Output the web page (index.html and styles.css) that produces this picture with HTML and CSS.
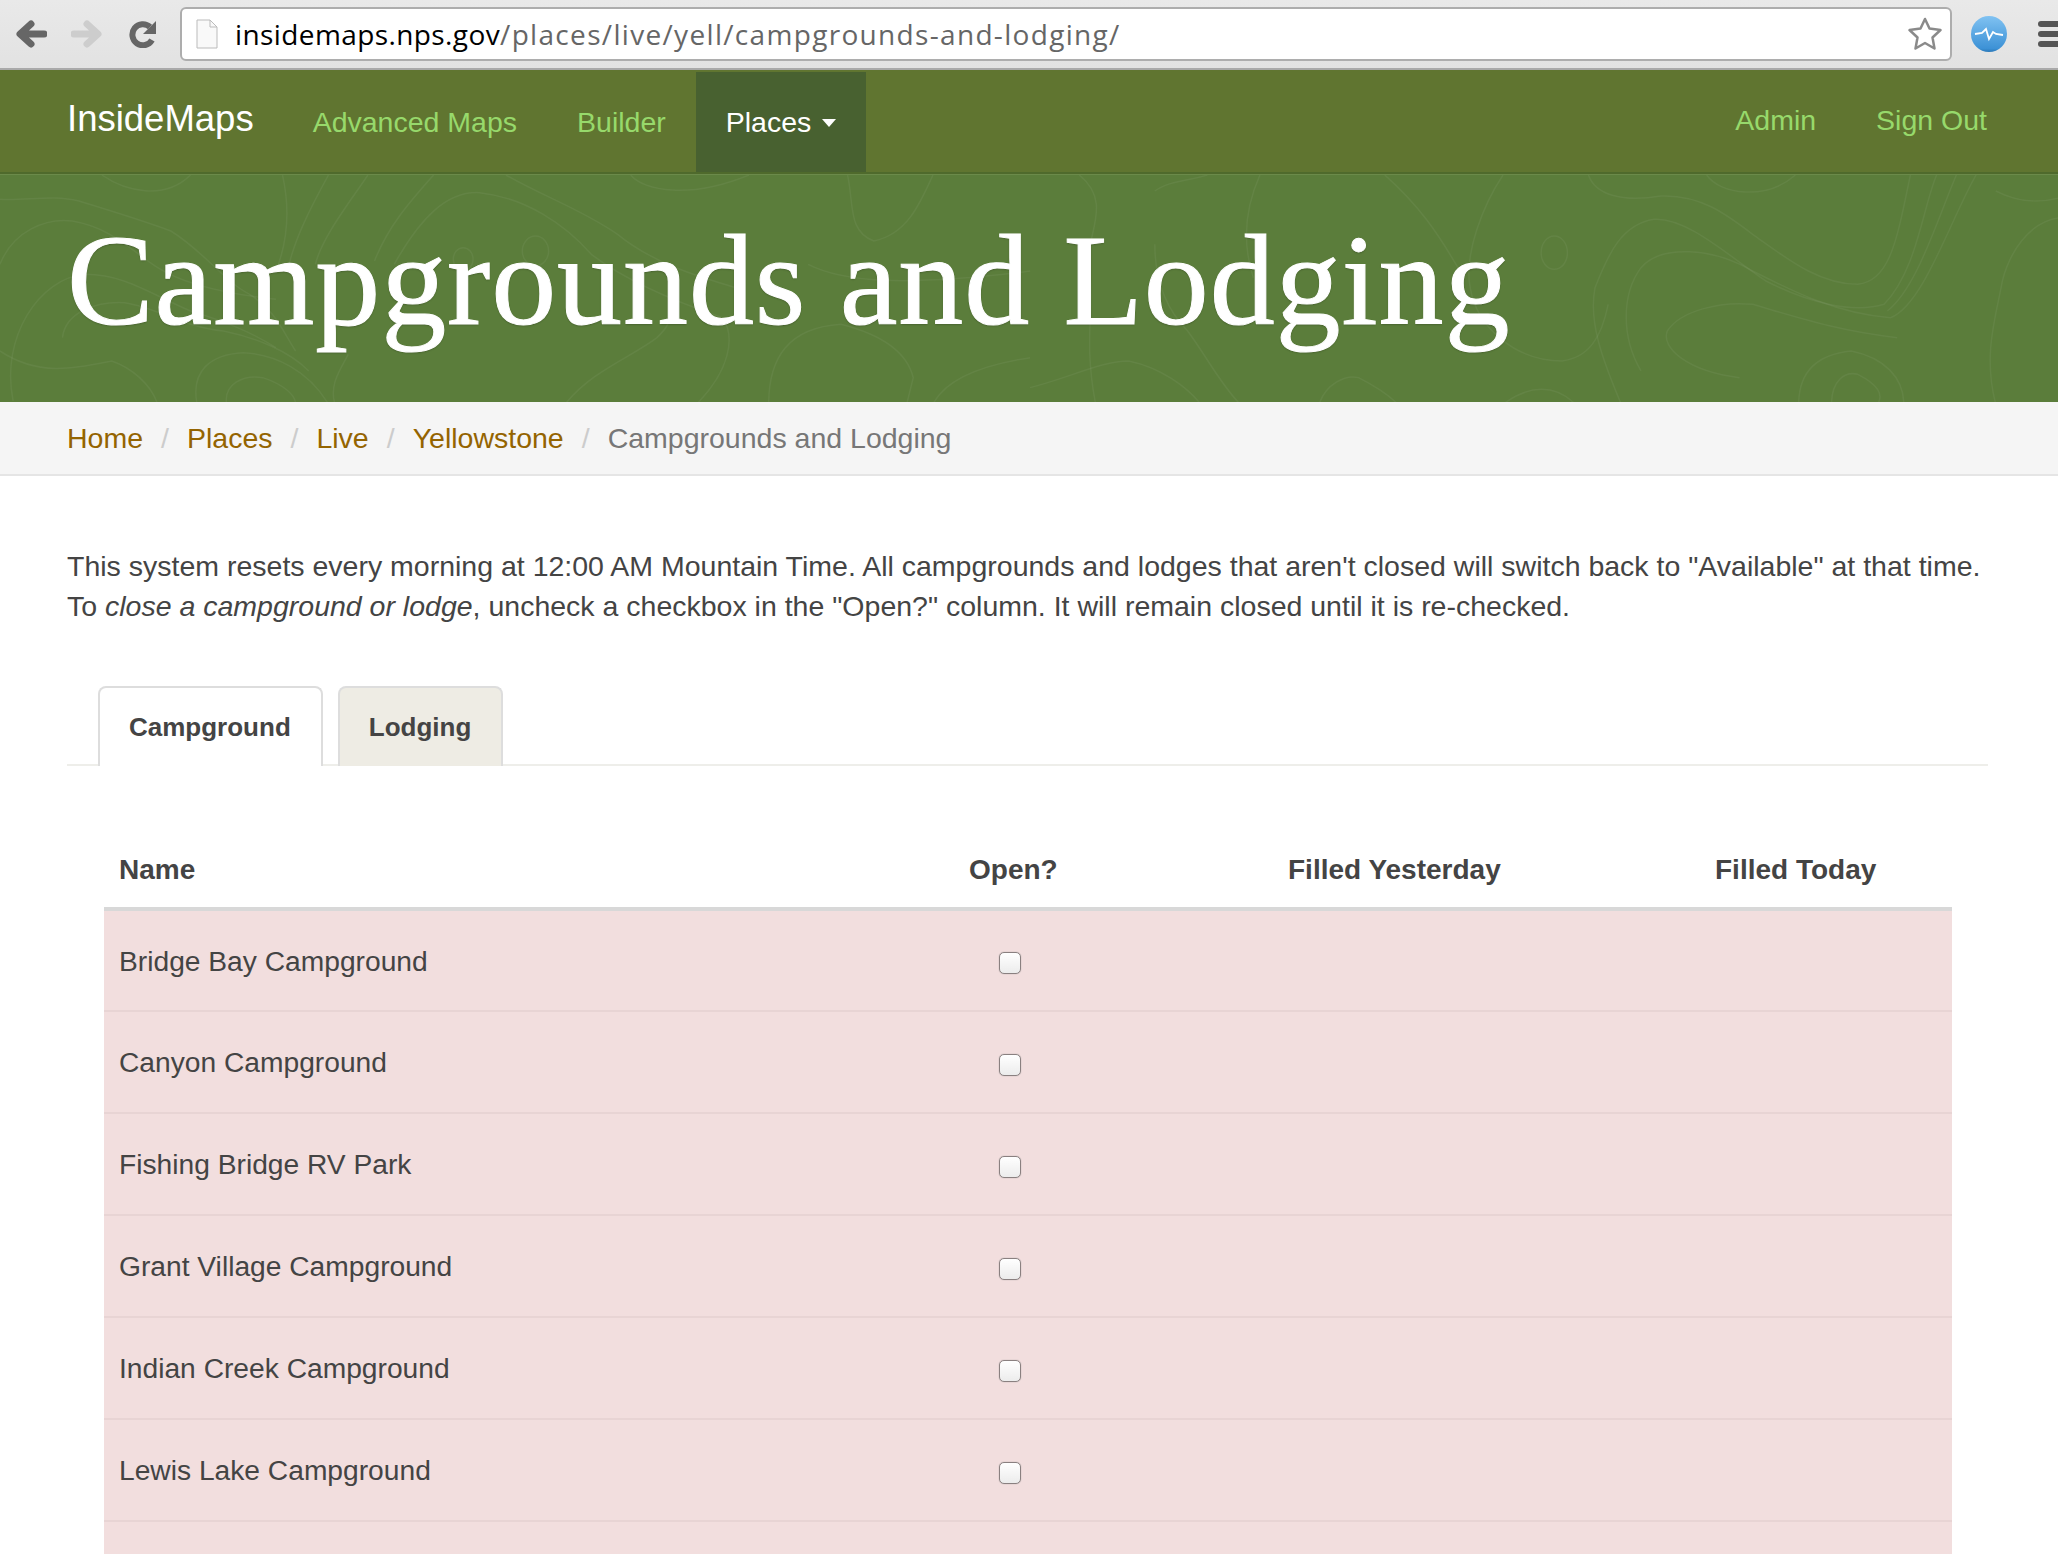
FILE: index.html
```html
<!DOCTYPE html>
<html lang="en">
<head>
  <meta charset="UTF-8">
  <title>Campgrounds and Lodging</title>
  <link rel="stylesheet" href="styles.css">
</head>
<body>
  <div class="browser-bar">
    <svg class="back-icon" width="31" height="28" viewBox="0 0 31 28"><path d="M28 14 H6 M15 4 L4 14 L15 24" fill="none" stroke="#666" stroke-width="7" stroke-linecap="round" stroke-linejoin="round"/></svg>
    <svg class="forward-icon" width="31" height="28" viewBox="0 0 31 28"><path d="M3 14 H25 M16 4 L27 14 L16 24" fill="none" stroke="#cdcdcd" stroke-width="7" stroke-linecap="round" stroke-linejoin="round"/></svg>
    <svg class="reload-icon" width="29" height="28" viewBox="0 0 29 28"><path d="M23 20 A10.500 10.500 0 1 1 21 7" fill="none" stroke="#666" stroke-width="6"/><path d="M27 1 V14 H14 Z" fill="#666"/></svg>
    <div class="url-box">
      <svg class="page-icon" width="22" height="30" viewBox="0 0 22 30"><path d="M1 1 H14 L21 8 V29 H1 Z" fill="#f9f9f9" stroke="#bbb"/><path d="M14 1 V8 H21" fill="none" stroke="#bbb"/></svg>
      <span class="url-text"><span class="url-host">insidemaps.nps.gov</span>/places/live/yell/campgrounds-and-lodging/</span>
      <svg class="star" width="36" height="34" viewBox="0 0 36 34"><path d="M18 2 L22.500 11.500 L33.500 13 L25.500 20.500 L27.500 31.500 L18 26 L8.500 31.500 L10.500 20.500 L2.500 13 L13.500 11.500 Z" fill="#fff" stroke="#8a8a8a" stroke-width="2.500" stroke-linejoin="round"/></svg>
    </div>
    <svg class="ext-icon" width="36" height="38" viewBox="0 0 36 38"><defs><linearGradient id="extBlue" x1="0" y1="0" x2="0" y2="1"><stop offset="0" stop-color="#80c2f2"/><stop offset="0.9" stop-color="#3d92d6"/><stop offset="1" stop-color="#2a78b8"/></linearGradient></defs><circle cx="18" cy="19" r="18" fill="url(#extBlue)"/><path d="M4 19 L11 18 L15 14 L18 24 L22 17 L25 19 L32 20" fill="none" stroke="#fff" stroke-width="1.800"/></svg>
    <div class="menu-icon"><span></span><span></span><span></span></div>
  </div>

  <nav class="navbar">
    <a class="brand" href="#">InsideMaps</a>
    <a class="nav-link" href="#">Advanced Maps</a>
    <a class="nav-link" href="#">Builder</a>
    <a class="nav-link active" href="#">Places <span class="caret"></span></a>
    <div class="nav-right">
      <a class="nav-link" href="#">Admin</a>
      <a class="nav-link" href="#">Sign Out</a>
    </div>
  </nav>

  <header class="hero">
    <svg class="topo" width="2058" height="228" viewBox="0 0 2058 228" fill="none">
      <g transform="scale(0.657 0.3333) translate(0 -12)">
        <path d="M0 85 C40 90 80 70 120 90 C170 120 220 150 260 180 C310 240 340 330 380 370 C420 420 430 480 450 540"/>
        <path d="M0 280 C20 180 70 140 110 150 C170 170 200 240 240 290 C280 340 350 370 420 385"/>
        <path d="M20 690 C0 500 60 320 130 310 C190 310 230 370 290 420 C340 450 380 480 420 530"/>
        <path d="M95 500 C100 420 150 390 190 395 C240 410 280 470 340 480 C390 500 440 540 470 600"/>
        <path d="M155 12 C190 60 250 90 290 12"/>
        <path d="M300 700 C290 600 320 550 370 545 C420 550 470 600 500 700"/>
        <path d="M345 700 C340 640 370 610 400 620 C430 640 450 670 450 700"/>
        <path d="M0 540 C60 620 120 590 170 570 C200 590 230 640 240 700"/>
        <ellipse cx="705" cy="265" rx="15" ry="35"/>
        <ellipse cx="815" cy="240" rx="20" ry="45"/>
        <path d="M430 12 C440 100 440 200 420 300"/>
        <path d="M500 12 C470 120 450 200 440 280"/>
        <path d="M560 12 C530 100 490 200 480 280"/>
        <path d="M600 280 C640 140 680 60 730 65 C800 80 860 160 900 250 C960 340 1040 400 1100 440 C1120 500 1110 600 1060 700"/>
        <path d="M660 12 C620 100 590 170 570 270"/>
        <path d="M770 12 C830 80 880 110 940 190 C990 270 1050 310 1120 350"/>
        <path d="M960 12 C980 60 1050 85 1140 12"/>
        <path d="M1290 12 C1300 100 1290 180 1330 210 C1380 190 1400 100 1420 12"/>
        <path d="M1170 700 C1170 560 1200 470 1280 460 C1340 490 1380 540 1390 620 L1380 700"/>
        <path d="M860 700 C900 600 960 560 1000 500 C1010 480 1020 460 1020 430"/>
        <path d="M1420 700 C1440 620 1500 580 1568 560"/>
        <path d="M1230 280 C1280 330 1370 350 1568 300"/>
        <path d="M510 700 C500 640 520 590 530 550"/>
      </g>
      <g transform="translate(1030 0) scale(0.657 0.3333) translate(0 -12)">
        <path d="M850 12 C860 70 900 95 960 75 C1020 70 1060 130 1100 190 C1150 260 1200 340 1260 340 C1310 330 1320 200 1340 12"/>
        <path d="M1380 12 C1360 100 1350 300 1300 400 C1250 430 1180 390 1120 330 C1060 250 1000 140 950 145 C900 160 880 250 860 350 C850 450 870 560 900 700"/>
        <path d="M1440 12 C1400 150 1360 400 1310 440 C1230 430 1160 360 1100 300 C1040 230 960 220 930 290 C900 370 900 500 930 600"/>
        <path d="M1410 12 C1380 150 1350 350 1305 420"/>
        <path d="M1320 500 C1230 480 1170 440 1100 400 C1050 390 990 420 970 480 C960 530 1000 600 1080 620"/>
        <ellipse cx="798" cy="245" rx="20" ry="50"/>
        <path d="M1170 700 C1170 600 1200 550 1250 540 C1300 560 1330 620 1330 700"/>
        <path d="M1220 700 C1220 630 1240 600 1260 610 C1290 640 1300 670 1290 700"/>
        <path d="M1568 80 C1530 100 1500 90 1470 60"/>
        <path d="M1568 140 C1520 150 1490 250 1480 330 C1470 440 1450 550 1470 700"/>
        <path d="M720 700 C760 640 800 640 830 700"/>
        <path d="M1030 12 C1050 70 1120 90 1165 12"/>
        <path d="M75 12 C130 100 80 200 90 300 C100 400 80 500 100 700"/>
        <path d="M190 60 C210 30 240 30 270 12"/>
        <path d="M190 220 C190 300 200 400 240 480 C270 560 290 640 320 700"/>
        <path d="M350 12 C330 100 320 200 340 320"/>
        <path d="M540 12 C590 100 620 180 660 320"/>
        <path d="M720 12 C690 100 660 250 670 350 C680 470 740 570 810 570 C850 560 870 500 880 400"/>
        <path d="M0 650 C60 620 110 570 150 570 C200 590 240 650 260 700"/>
        <path d="M440 700 C450 640 480 610 500 620 C530 650 550 680 560 700"/>
      </g>
    </svg>
    <h1 class="hero-title">Campgrounds and Lodging</h1>
  </header>

  <div class="breadcrumb">
    <a href="#">Home</a><span class="sep">/</span>
    <a href="#">Places</a><span class="sep">/</span>
    <a href="#">Live</a><span class="sep">/</span>
    <a href="#">Yellowstone</a><span class="sep">/</span>
    <span class="current">Campgrounds and Lodging</span>
  </div>

  <main class="content">
    <p class="intro">This system resets every morning at 12:00 AM Mountain Time. All campgrounds and lodges that aren't closed will switch back to "Available" at that time.<br>To <em>close a campground or lodge</em>, uncheck a checkbox in the "Open?" column. It will remain closed until it is re-checked.</p>

    <div class="tabs">
      <a class="tab selected" href="#">Campground</a>
      <a class="tab" href="#">Lodging</a>
    </div>

    <table class="camp-table">
      <thead>
        <tr><th class="col-name">Name</th><th class="col-open">Open?</th><th class="col-yest">Filled Yesterday</th><th class="col-today">Filled Today</th></tr>
      </thead>
      <tbody>
        <tr><td>Bridge Bay Campground</td><td class="check-cell"><span class="check"></span></td><td></td><td></td></tr>
        <tr><td>Canyon Campground</td><td class="check-cell"><span class="check"></span></td><td></td><td></td></tr>
        <tr><td>Fishing Bridge RV Park</td><td class="check-cell"><span class="check"></span></td><td></td><td></td></tr>
        <tr><td>Grant Village Campground</td><td class="check-cell"><span class="check"></span></td><td></td><td></td></tr>
        <tr><td>Indian Creek Campground</td><td class="check-cell"><span class="check"></span></td><td></td><td></td></tr>
        <tr><td>Lewis Lake Campground</td><td class="check-cell"><span class="check"></span></td><td></td><td></td></tr>
        <tr><td>&nbsp;</td><td></td><td></td><td></td></tr>
      </tbody>
    </table>
  </main>
</body>
</html>
```

FILE: styles.css
```css
html, body {
  height: 1554px;
  overflow: hidden;
}
body {
  margin: 0;
  font-family: "Liberation Sans", Arial, sans-serif;
  font-size: 28.5px;
  line-height: 40px;
  color: #444;
  background: #fff;
}
a {
  text-decoration: none;
}

/* browser chrome */
.browser-bar {
  display: flex;
  align-items: center;
  height: 70px;
  box-sizing: border-box;
  padding: 0 0 0 16px;
  background: linear-gradient(#e9e9e9, #e2e2e2);
  border-bottom: 2px solid #a9a9a9;
  overflow: hidden;
}
.back-icon,
.forward-icon,
.reload-icon {
  flex: none;
  margin-top: -1px;
}
.forward-icon {
  margin-left: 24px;
}
.reload-icon {
  margin: -1px 22px 0 27px;
}
.url-box {
  flex: none;
  display: flex;
  align-items: center;
  width: 1772px;
  height: 54px;
  box-sizing: border-box;
  padding: 0 7px 0 14px;
  background: #fff;
  border: 2px solid #adadad;
  border-radius: 6px;
}
.page-icon {
  flex: none;
  margin-right: 17px;
}
.url-text {
  flex: 1;
  margin-top: -1px;
  font-family: "Open Sans", sans-serif;
  font-size: 28px;
  letter-spacing: 1.32px;
  color: #666;
}
.url-host {
  letter-spacing: 0.4px;
  color: #000;
}
.ext-icon {
  flex: none;
  margin-left: 19px;
}
.menu-icon {
  flex: none;
  display: flex;
  flex-direction: column;
  gap: 4px;
  width: 30px;
  margin: -1px 0 0 31px;
}
.menu-icon span {
  height: 6px;
  background: #555;
  border-radius: 3px;
}

/* navbar */
.navbar {
  display: flex;
  align-items: stretch;
  height: 104px;
  box-sizing: border-box;
  padding: 0 71px 0 67px;
  background: #607530;
  border-bottom: 2px solid #4f6a2c;
}
.brand {
  align-self: center;
  margin: -5px 29px 0 0;
  font-size: 36.5px;
  color: #fff;
}
.nav-link {
  display: flex;
  align-items: center;
  padding: 2px 30px 0;
  color: #97d96b;
}
.nav-link.active {
  margin-top: 2px;
  padding-top: 0;
  background: #486130;
  color: #fff;
}
.caret {
  display: inline-block;
  margin: 2px 0 0 11px;
  border-top: 8px solid #fff;
  border-left: 7.5px solid transparent;
  border-right: 7.5px solid transparent;
}
.nav-right {
  display: flex;
  margin-left: auto;
}
.nav-right .nav-link {
  padding: 0 0 3px 60px;
}

/* hero */
.hero {
  position: relative;
  height: 228px;
  padding: 0 67px;
  background: #5b7d3b;
  border-top: 1px solid #6b8a4a;
  box-sizing: border-box;
  overflow: hidden;
}
.topo {
  position: absolute;
  left: 0;
  top: 0;
}
.topo path,
.topo ellipse {
  stroke: #fff;
  stroke-opacity: 0.05;
  stroke-width: 1.500px;
  vector-effect: non-scaling-stroke;
}
.hero-title {
  position: relative;
  margin: 0;
  font-family: "Liberation Serif", "Times New Roman", serif;
  font-size: 130px;
  font-weight: normal;
  line-height: 211px;
  letter-spacing: 0.9px;
  color: #fff;
  -webkit-text-stroke: 1px #fff;
  text-shadow: 0 1px 2px rgba(0, 0, 0, 0.3);
}

/* breadcrumb */
.breadcrumb {
  display: flex;
  align-items: center;
  height: 74px;
  box-sizing: border-box;
  padding: 0 67px;
  background: #f5f5f5;
  border-bottom: 2px solid #e5e5e5;
}
.breadcrumb a {
  color: #946400;
}
.sep {
  margin: 0 18px;
  color: #ccc;
}
.current {
  color: #777;
}

/* content */
.content {
  padding: 0 70px 0 67px;
}
.intro {
  margin: 70px 0 0;
}
.tabs {
  display: flex;
  align-items: flex-end;
  height: 80px;
  margin-top: 58px;
  padding-left: 31px;
  border-bottom: 2px solid #eeeeea;
}
.tab {
  display: flex;
  align-items: center;
  height: 80px;
  box-sizing: border-box;
  margin: 0 15px -2px 0;
  padding: 0 30px 0 29px;
  font-size: 26px;
  font-weight: bold;
  color: #444;
  background: #eeece4;
  border: 2px solid #ddd;
  border-bottom: none;
  border-radius: 8px 8px 0 0;
}
.tab.selected {
  background: #fff;
}
.camp-table {
  width: 1848px;
  margin: 63px 0 0 37px;
  border-collapse: collapse;
  table-layout: fixed;
}
.camp-table th {
  height: 80px;
  padding: 4px 15px 0;
  font-size: 28px;
  text-align: left;
  border-bottom: 4px solid #d8d8d8;
  box-sizing: border-box;
}
.col-name { width: 850px; }
.col-open { width: 319px; }
.col-yest { width: 427px; }
.camp-table td {
  height: 102px;
  box-sizing: border-box;
  padding: 0 15px;
  font-size: 28.2px;
  background: #f2dede;
  border-bottom: 2px solid #e8d4d4;
}
.check-cell {
  padding-left: 30px;
}
.check {
  display: block;
  width: 22px;
  height: 22px;
  margin: 5px 0 0 30px;
  box-sizing: border-box;
  background: linear-gradient(#fff, #ececec);
  border: 1px solid #8a8080;
  border-radius: 5px;
  box-shadow: 0 0 1px #888;
}
```
